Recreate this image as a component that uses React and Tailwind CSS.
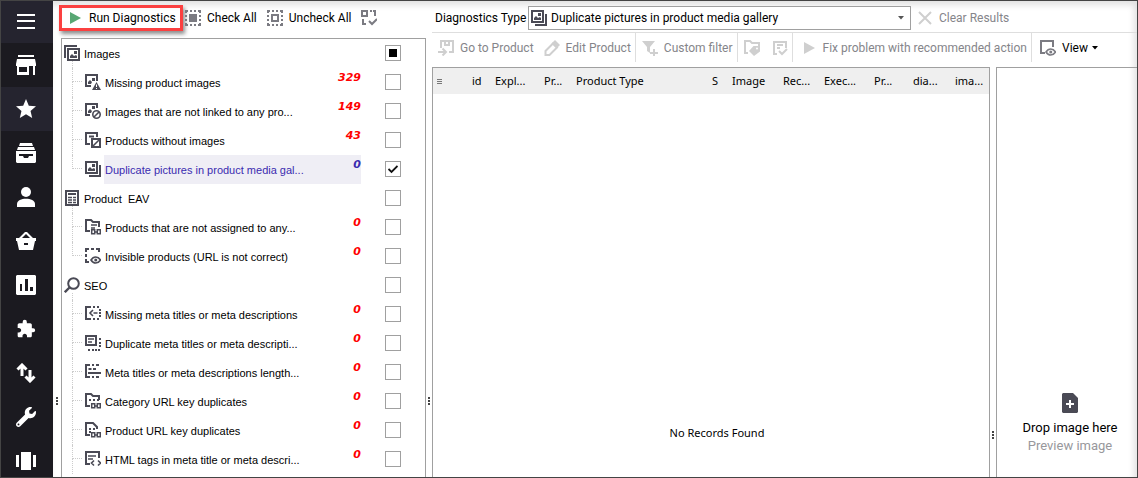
import React, { useEffect, useRef, useState } from "react";
import clsx from "clsx";
import { FaWrench } from "react-icons/fa";
import { MdExtension, MdStar } from "react-icons/md";

const NAV_ITEMS = [
    { id: "menu", label: "Menu" },
    { id: "store", label: "Store" },
    { id: "star", label: "Favorites" },
    { id: "archive", label: "Orders" },
    { id: "person", label: "Customers" },
    { id: "basket", label: "Basket" },
    { id: "chart", label: "Reports" },
    { id: "puzzle", label: "Addons" },
    { id: "arrows", label: "Import and export" },
    { id: "wrench", label: "Tools" },
    { id: "carousel", label: "Windows" },
];

const GROUPS = [
    {
        id: "images", label: "Images", icon: "images", state: "partial",
        items: [
            { id: "missing", label: "Missing product images", icon: "imageWarn", count: 329 },
            { id: "unlinked", label: "Images that are not linked to any pro...", icon: "imageBan", count: 149 },
            { id: "without", label: "Products without images", icon: "productNoImage", count: 43 },
            { id: "duplicate", label: "Duplicate pictures in product media gal...", icon: "duplicate", count: 0 },
        ],
    },
    {
        id: "eav", label: "Product  EAV", icon: "eav",
        items: [
            { id: "unassigned", label: "Products that are not assigned to any...", icon: "folderLink", count: 0 },
            { id: "invisible", label: "Invisible products (URL is not correct)", icon: "invisible", count: 0 },
        ],
    },
    {
        id: "seo", label: "SEO", icon: "search", open: true,
        items: [
            { id: "metaMissing", label: "Missing meta titles or meta descriptions", icon: "metaMissing", count: 0 },
            { id: "metaDup", label: "Duplicate meta titles or meta descripti...", icon: "metaDup", count: 0 },
            { id: "metaLen", label: "Meta titles or meta descriptions length...", icon: "metaLen", count: 0 },
            { id: "catUrl", label: "Category URL key duplicates", icon: "folderDots", count: 0 },
            { id: "prodUrl", label: "Product URL key duplicates", icon: "fileDots", count: 0 },
            { id: "html", label: "HTML tags in meta title or meta descri...", icon: "htmlTags", count: 0 },
        ],
    },
];

const COLUMNS = [
    { label: "id", width: "w-[23px]" },
    { label: "Expl...", width: "w-[49px]" },
    { label: "Pr...", width: "w-[32px]" },
    { label: "Product Type", width: "w-[136px]" },
    { label: "S", width: "w-[20px]" },
    { label: "Image", width: "w-[51px]" },
    { label: "Rec...", width: "w-[41px]" },
    { label: "Exec...", width: "w-[50px]" },
    { label: "Pr...", width: "w-[39px]" },
    { label: "dia...", width: "w-[42px]" },
    { label: "ima...", width: "" },
];

// link chain in the lower right corner
const chain = <path d="M6.700 10.700h3v4h-3zM12.300 10.700h3v4h-3zM9 13h4" strokeWidth="1.500" />;

const eye = (
    <>
        <path d="M6 12c2.500-4 7-4 9.500 0c-2.500 4-7 4-9.500 0z" strokeWidth="1.600" />
        <circle cx="10.750" cy="12" r="1.500" fill="currentColor" stroke="none" />
    </>
);

const ICONS = {
    images: (
        <>
            <path d="M1 13V1h12" />
            <path d="M4 4h11v11H4z" />
            <path d="M6 13v-2l2-2 2 2 2-1 1 1v2z" fill="currentColor" stroke="none" />
            <path d="M10 6h3v3h-3z" fill="currentColor" stroke="none" />
        </>
    ),
    imageWarn: (
        <>
            <path d="M12 7V1H1v11h5" />
            <path d="M3 10V8l2-2 2 2-1 2z" fill="currentColor" stroke="none" />
            <path d="M7 4h3v3h-3z" fill="currentColor" stroke="none" />
            <path d="M11.500 8L16 16H7z" fill="currentColor" stroke="none" />
            <path d="M11.500 10.500v2.500M11.500 14v1" stroke="#fff" strokeWidth="1" />
        </>
    ),
    imageBan: (
        <>
            <path d="M12 5V1H1v11h4" />
            <path d="M3 10V8l2-2 2 2-1 2z" fill="currentColor" stroke="none" />
            <path d="M7 3h3v3h-3z" fill="currentColor" stroke="none" />
            <circle cx="11.500" cy="11.500" r="3.700" strokeWidth="1.600" />
            <path d="M9 14l5-5" strokeWidth="1.600" />
        </>
    ),
    productNoImage: (
        <>
            <path d="M12 5V1H1v11h4M4 4.500h5" />
            <path d="M7 7h8v8H7z" />
            <path d="M8 14l6-6" strokeWidth="1.600" />
        </>
    ),
    duplicate: (
        <>
            <path d="M1 1h11v11H1z" />
            <path d="M15 4v11H4" />
            <path d="M3 10V8l2-2 2 2 2-1 1 1v2z" fill="currentColor" stroke="none" />
            <path d="M7 3h3v3h-3z" fill="currentColor" stroke="none" />
        </>
    ),
    eav: (
        <>
            <path d="M2 1h12v14H2z" />
            <path d="M4 4h8" />
            <path d="M4 7.500h4M9 7.500h3M4 10h4M9 10h3M4 12.500h4M9 12.500h3" strokeWidth="1.400" />
        </>
    ),
    search: (
        <>
            <circle cx="9.500" cy="6.500" r="5.300" />
            <path d="M5.500 10.500L.8 15.200" strokeWidth="2.400" />
        </>
    ),
    folderLink: (
        <>
            <path d="M5 12H1V1h5l2 2h6v5" />
            <path d="M6 6h6M6 9h4" strokeWidth="1.500" />
            {chain}
        </>
    ),
    invisible: (
        <>
            <path d="M1 4V1h3M6 1h3M11 1h3v3M1 6v3M1 11v3h3" />
            {eye}
        </>
    ),
    metaMissing: (
        <>
            <path d="M6 1H1v12h5" />
            <path d="M8 4L5 7l3 3M8.500 7h4" strokeWidth="1.600" />
            <path d="M8 1h2M12 1h2M14 4h2M14 7h2M14 10h2M8 13h2M12 13h2" />
        </>
    ),
    metaDup: (
        <>
            <path d="M1 1h10v9H1z" />
            <path d="M3 4h6M3 7h4" strokeWidth="1.500" />
            <path d="M14 4h2M14 8h2M14 11h2M13 15h2M3 15h2M7 15h2M10 15h2" />
        </>
    ),
    metaLen: (
        <>
            <path d="M5 1H1v12h4" />
            <path d="M7 1h2M11 1h3M7 13h2M11 13h3" />
            <path d="M3.500 5h3M8 5h3M3 9h13" />
        </>
    ),
    folderDots: (
        <>
            <path d="M5 13H1V1h5l2 2h6v4" />
            <path d="M4 7h2M8 7h2M12 7h2" />
            {chain}
        </>
    ),
    fileDots: (
        <>
            <path d="M5 13H1V1h7l4 4v2" />
            <path d="M4 7h2M8 7h2M4 10h2" />
            {chain}
        </>
    ),
    htmlTags: (
        <>
            <path d="M5 13H1V1h13v6" />
            <path d="M3 5h8M3 8h5" strokeWidth="1.600" />
            <path d="M9 9.500L6.500 12 9 14.500M13 9.500l2.500 2.500L13 14.500" strokeWidth="1.600" />
        </>
    ),
    checkAll: (
        <>
            <path d="M0 1h3M5 1h2M9 1h2M13 1h3M0 15h3M5 15h2M9 15h2M13 15h3M1 0v3M1 5v2M1 9v2M1 13v3M15 0v3M15 5v2M15 9v2M15 13v3" />
            <path d="M4 4h8v8H4z" fill="currentColor" stroke="none" />
        </>
    ),
    uncheckAll: (
        <>
            <path d="M0 1h3M5 1h2M9 1h2M13 1h3M0 15h3M5 15h2M9 15h2M13 15h3M1 0v3M1 5v2M1 9v2M1 13v3M15 0v3M15 5v2M15 9v2M15 13v3" />
            <path d="M5 5h6v6H5z" />
        </>
    ),
    invert: (
        <>
            <path d="M1 1h5v5H1z" />
            <path d="M9 1h2M12 1h2v5M2 9v5h3" />
            <path d="M8 11l3 3 5-5" />
        </>
    ),
    goTo: (
        <>
            <path d="M3 8V1h12v11h-4" />
            <path d="M7 1v4h4V1" />
            <path d="M0 12h7M4.500 8.500L8 12l-3.500 3.500" />
        </>
    ),
    edit: (
        <>
            <path d="M1.500 11L9 3.500l4 4L5.500 15H1.500z" />
            <path d="M11 0l5 5-3.500 3.500-5-5z" fill="currentColor" stroke="none" />
        </>
    ),
    filter: (
        <>
            <path d="M0 1h13L8 7v6l-3-2V7z" fill="currentColor" stroke="none" />
            <path d="M12 9v7M8 13h8" />
        </>
    ),
    tagFolder: (
        <>
            <path d="M4 13H1V1h5l2 2h7v3" />
            <path d="M9.500 6H16v5.500L10 16l-5-5z" fill="currentColor" stroke="none" />
            <circle cx="13" cy="8.500" r="1" fill="#fff" stroke="none" />
        </>
    ),
    docCheck: (
        <>
            <path d="M5 14H2V2h12v6M5 5h6M5 8h3" />
            <path d="M7 11l3 3 5-5" />
        </>
    ),
    play: <path d="M3 2l11 6-11 6z" fill="currentColor" stroke="none" />,
    clear: <path d="M2 2l12 12M14 2L2 14" />,
    view: (
        <>
            <path d="M5 13H1V1h12v6" />
            {eye}
        </>
    ),
};

function Icon({ name, className }) {
    return (
        <svg viewBox="0 0 16 16" fill="none" stroke="currentColor" strokeWidth="2" aria-hidden="true" className={clsx("size-4 shrink-0", className)}>
            {ICONS[name]}
        </svg>
    );
}

const NAV_ICONS = {
    menu: <path d="M1 2h18v2H1zM1 8h18v2H1zM1 15h18v2H1z" />,
    store: <path fillRule="evenodd" d="M2 0h16v2H2zM1 4h18l1 5v2h-1v9h-2v-9h-4v9H1v-9H0V9zM3 12v5h8v-5z" />,
    archive: <path fillRule="evenodd" d="M4 0h12l1 3H3zM2 4h16l1 3H1zM0 8h20v11l-1 1H1l-1-1zM3 11v2h4l1 2h4l1-2h4v-2z" />,
    person: (
        <>
            <circle cx="10" cy="5" r="5" />
            <path d="M1 20v-3c0-7 18-7 18 0v3z" />
        </>
    ),
    basket: <path fillRule="evenodd" d="M9 1h2l6 6h3v3h-1l-2 9H3L1 10H0V7h3zM10 3L6 7h8zM8 12v2h4v-2z" />,
    chart: <path fillRule="evenodd" d="M1 0h18l1 1v18l-1 1H1l-1-1V1zM4 9v7h2V9zM9 4v12h3V4zM14 12v4h3v-4z" />,
    arrows: <path d="M6 13V2M1.500 6.500L6 2l4.500 4.500M14 7v11M9.500 13.500L14 18l4.500-4.500" fill="none" stroke="currentColor" strokeWidth="3" />,
    carousel: <path d="M5 1h10v18H5zM0 4h3v12H0zM17 4h3v12h-3z" />,
};

function NavIcon({ name }) {
    if (name === "star") return <MdStar className="size-6" />;
    if (name === "puzzle") return <MdExtension className="size-5" />;
    if (name === "wrench") return <FaWrench className="size-5" />;
    return (
        <svg viewBox="0 0 20 20" fill="currentColor" aria-hidden="true" className="size-5">
            {NAV_ICONS[name]}
        </svg>
    );
}

function Sidebar() {
    return (
        <nav className="flex w-[52px] shrink-0 flex-col overflow-hidden bg-[#1b1a20] text-white">
            {NAV_ITEMS.map((item) => (
                <button
                    key={item.id}
                    aria-label={item.label}
                    className={clsx(
                        "flex shrink-0 items-center justify-center pr-[2px]",
                        item.id === "menu" ? "h-[42px] bg-[#25242f]" : "h-11",
                        item.id === "star" && "bg-[#25242f]"
                    )}
                >
                    <NavIcon name={item.id} />
                </button>
            ))}
        </nav>
    );
}

// drag handle between two panes
function Splitter({ className }) {
    return (
        <div className={clsx("flex shrink-0 flex-col items-center gap-px", className)}>
            <span className="size-[2px] bg-[#444]" />
            <span className="size-[2px] bg-[#444]" />
            <span className="size-[2px] bg-[#444]" />
        </div>
    );
}

function Check({ id, checked, partial, onChange }) {
    const ref = useRef(null);

    useEffect(() => {
        ref.current.indeterminate = !!partial;
    }, [partial]);

    return (
        <span className="mt-[6px] grid size-4 shrink-0 place-items-center">
            <input
                ref={ref}
                id={id}
                type="checkbox"
                checked={checked}
                onChange={onChange}
                className="col-start-1 row-start-1 size-4 appearance-none border border-[#a0a0a0] bg-white"
            />
            {partial && <span className="pointer-events-none col-start-1 row-start-1 size-2 bg-black" />}
            {checked && !partial && (
                <svg viewBox="0 0 10 10" className="pointer-events-none col-start-1 row-start-1 size-[10px]" fill="none" stroke="#111" strokeWidth="1.800">
                    <path d="M.5 5L3.500 8 9.500 2" />
                </svg>
            )}
        </span>
    );
}

function TreeItem({ item, last, selected, checked, onToggle }) {
    return (
        <li className="flex h-[29px] items-start pr-6 pl-[10px]">
            <span className="mr-px flex h-full w-3 shrink-0 flex-col">
                <span className="h-[14px] w-[10px] border-b border-l border-dotted border-[#ccc]" />
                <span className={clsx("flex-1", !last && "border-l border-dotted border-[#ccc]")} />
            </span>
            <Icon name={item.icon} className="mt-[6px] mr-[3px] text-[#4a4a55]" />
            <label
                htmlFor={item.id}
                className={clsx(
                    "mr-6 flex h-full flex-1 items-center justify-between pl-px whitespace-nowrap",
                    selected && "bg-[#efeef5] text-[#3a2bb0]"
                )}
            >
                <span>{item.label}</span>
                <span
                    className={clsx(
                        "self-start pt-[2px] font-['DejaVu_Sans',sans-serif] font-bold italic",
                        selected ? "text-[#3a2bb0]" : "text-[#f00]"
                    )}
                >
                    {item.count}
                </span>
            </label>
            <Check id={item.id} checked={checked} onChange={onToggle} />
        </li>
    );
}

function TreeGroup({ group, checked, onToggle }) {
    return (
        <li>
            <div className="flex h-[29px] items-start pr-6 pl-[2px]">
                <span className="mr-1 flex h-full w-4 shrink-0 flex-col pt-[6px]">
                    <Icon name={group.icon} className="text-[#4a4a55]" />
                    <span className="ml-2 flex-1 border-l border-dotted border-[#ccc]" />
                </span>
                <label htmlFor={group.id} className="flex h-full flex-1 items-center whitespace-pre">{group.label}</label>
                <Check id={group.id} checked={false} partial={group.state === "partial"} onChange={() => {}} />
            </div>
            <ul>
                {group.items.map((item, i) => (
                    <TreeItem
                        key={item.id}
                        item={item}
                        last={!group.open && i === group.items.length - 1}
                        selected={item.id === "duplicate"}
                        checked={checked.includes(item.id)}
                        onToggle={() => onToggle(item.id)}
                    />
                ))}
            </ul>
        </li>
    );
}

function DiagnosticsPane() {
    const [checked, setChecked] = useState(["duplicate"]);

    const handleToggle = (id) => {
        setChecked((prev) => (prev.includes(id) ? prev.filter((c) => c !== id) : [...prev, id]));
    };

    return (
        <section className="flex w-[373px] shrink-0 flex-col">
            <div className="flex h-[37px] shrink-0 items-start pt-1 pl-[6px]">
                <button className="mr-[2px] flex h-[26px] w-[124px] shrink-0 items-center border-[3px] border-[#fb4040] pl-[5px] whitespace-nowrap shadow-[2px_3px_4px_rgba(0,0,0,0.45)]">
                    <Icon name="play" className="mr-[6px] text-[#58a773]" />
                    Run Diagnostics
                </button>
                <button className="flex h-[26px] items-center gap-[6px] whitespace-nowrap">
                    <Icon name="checkAll" className="text-[#7b7b82]" />
                    Check All
                </button>
                <button className="ml-[10px] flex h-[26px] items-center gap-[6px] whitespace-nowrap">
                    <Icon name="uncheckAll" className="text-[#7b7b82]" />
                    Uncheck All
                </button>
                <button aria-label="Invert selection" className="ml-[10px] flex h-[26px] items-center">
                    <Icon name="invert" className="text-[#7b7b82]" />
                </button>
            </div>
            <div className="flex min-h-0 flex-1">
                <Splitter className="w-2 justify-end pb-[72px]" />
                <ul className="flex-1 overflow-hidden border border-b-0 border-[#a0a0a0] bg-white font-['Liberation_Sans',sans-serif] text-[11px] leading-4">
                    {GROUPS.map((group) => (
                        <TreeGroup key={group.id} group={group} checked={checked} onToggle={handleToggle} />
                    ))}
                </ul>
            </div>
        </section>
    );
}

function ToolButton({ icon, label, children, className }) {
    return (
        <button aria-label={label} className={clsx("flex h-full shrink-0 items-center gap-[6px] whitespace-nowrap text-[#85858a]", className)}>
            <Icon name={icon} className="text-[#cfcfcf]" />
            {children}
        </button>
    );
}

function Caret({ className }) {
    return (
        <svg viewBox="0 0 6 4" className={clsx("pointer-events-none h-1 w-[6px]", className)} fill="currentColor" aria-hidden="true">
            <path d="M0 0h6L3 3.500z" />
        </svg>
    );
}

function Divider() {
    return <span className="mx-1 h-full border-l border-[#dedede]" />;
}

function Toolbars() {
    return (
        <div className="shrink-0">
            <div className="flex h-8 items-center border-b border-[#dedede] pt-1 pl-[3px] pb-px">
                <label htmlFor="type" className="w-[93px] shrink-0 whitespace-nowrap">Diagnostics Type</label>
                <div className="flex h-6 w-[383px] items-center border border-[#a0a0a0] bg-white pr-[6px] pl-[2px]">
                    <Icon name="duplicate" className="mr-1 text-[#4a4a55]" />
                    <select id="type" className="min-w-0 flex-1 appearance-none bg-transparent outline-none">
                        <option>Duplicate pictures in product media gallery</option>
                    </select>
                    <Caret className="text-[#555]" />
                </div>
                <ToolButton icon="clear" className="ml-[6px]">Clear Results</ToolButton>
            </div>
            <div className="flex h-[29px] items-center pl-[6px]">
                <ToolButton icon="goTo">Go to Product</ToolButton>
                <ToolButton icon="edit" className="ml-[10px]">Edit Product</ToolButton>
                <Divider />
                <ToolButton icon="filter" className="ml-[2px]">Custom filter</ToolButton>
                <Divider />
                <ToolButton icon="tagFolder" label="Categories" className="ml-[2px]" />
                <ToolButton icon="docCheck" label="Approve" className="ml-3" />
                <Divider />
                <ToolButton icon="play" className="ml-1">Fix problem with recommended action</ToolButton>
                <Divider />
                <button className="ml-1 flex h-full items-center whitespace-nowrap">
                    <Icon name="view" className="mr-[6px] text-[#7b7b82]" />
                    <span className="mr-1">View</span>
                    <Caret />
                </button>
            </div>
        </div>
    );
}

function ResultsGrid() {
    return (
        <div className="flex min-w-0 flex-1 flex-col border border-b-0 border-[#a0a0a0] bg-white font-['Noto_Sans',sans-serif] text-[11px] leading-4">
            <table className="w-full table-fixed">
                <thead>
                    <tr className="h-[26px] bg-[#efefef]">
                        <th className="w-[35px] pl-1">
                            <svg viewBox="0 0 5 5" className="size-[5px]" aria-hidden="true">
                                <path d="M0 .5h5M0 2.500h5M0 4.500h5" stroke="#777" />
                            </svg>
                        </th>
                        {COLUMNS.map((col, i) => (
                            <th key={i} className={clsx("pl-1 text-left font-normal whitespace-nowrap", col.width)}>
                                {col.label}
                            </th>
                        ))}
                    </tr>
                </thead>
            </table>
            <p className="mt-auto pb-9 pl-3 text-center">No Records Found</p>
        </div>
    );
}

function PreviewPane() {
    return (
        <aside className="flex w-[141px] shrink-0 flex-col items-center justify-end border-t border-l border-[#a0a0a0] pb-[22px] pl-[6px] text-[13px] leading-[18px]">
            <svg viewBox="0 0 16 20" className="mb-[6px] h-5 w-4" aria-hidden="true">
                <path d="M1 0h10l5 5v14l-1 1H1l-1-1V1z" fill="#4a4a55" />
                <path d="M8 7v8M4 11h8" stroke="#fff" strokeWidth="2" />
            </svg>
            <p>Drop image here</p>
            <p className="text-[#98989c]">Preview image</p>
        </aside>
    );
}

export default function App() {
    return (
        <div className="flex h-screen overflow-hidden border border-[#444] bg-white font-['Roboto',sans-serif] text-[12px] leading-4 text-black">
            <Sidebar />
            <main className="flex min-w-0 flex-1 shadow-[inset_-3px_4px_6px_rgba(0,0,0,0.12)]">
                <DiagnosticsPane />
                <Splitter className="w-[6px] justify-end pb-[72px]" />
                <section className="flex min-w-0 flex-1 flex-col">
                    <Toolbars />
                    <div className="mt-[5px] flex min-h-0 flex-1">
                        <ResultsGrid />
                        <Splitter className="w-[6px] justify-end pb-[38px]" />
                        <PreviewPane />
                    </div>
                </section>
            </main>
        </div>
    );
}
